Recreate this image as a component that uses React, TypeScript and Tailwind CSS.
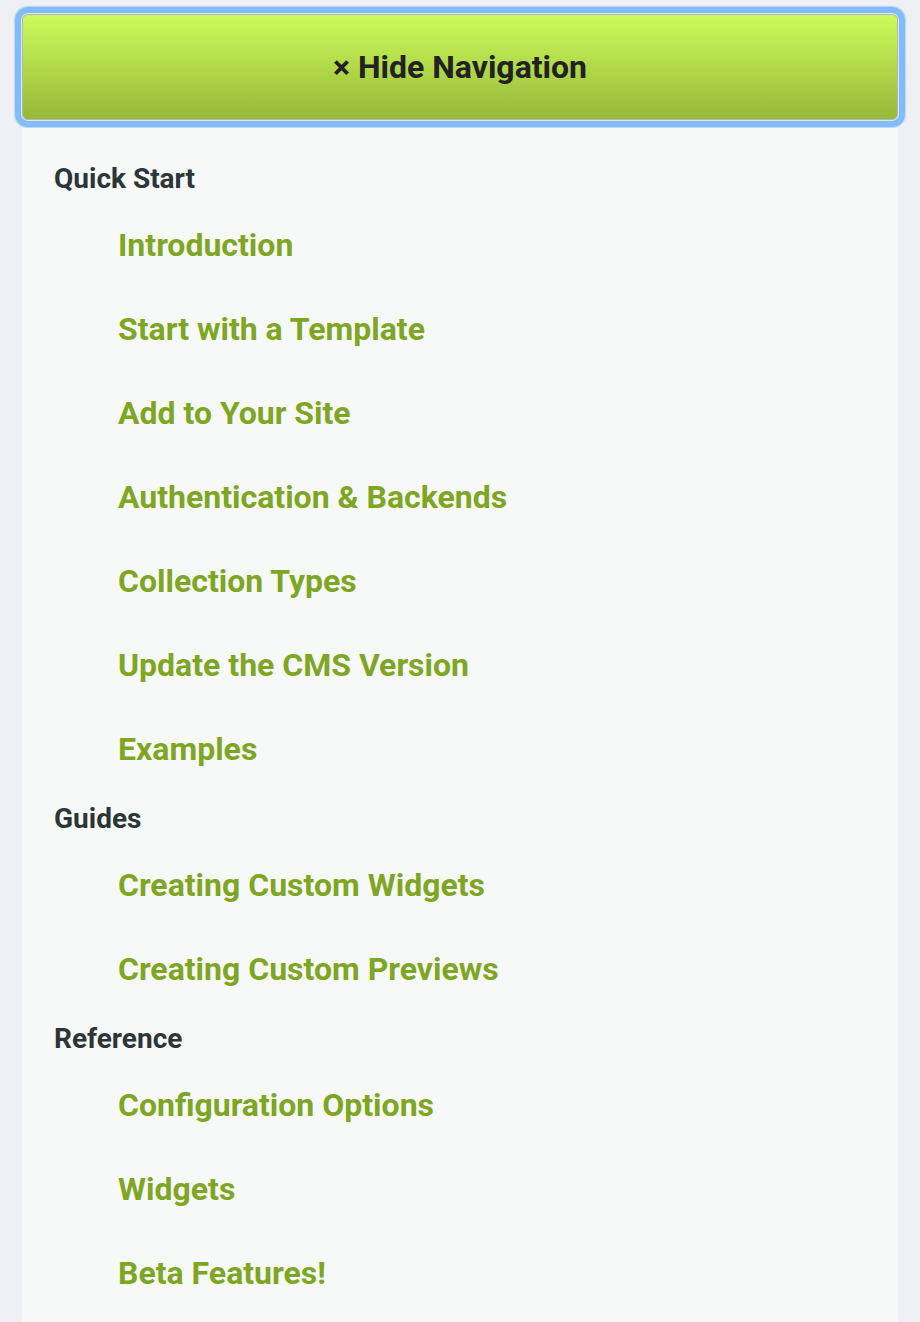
const sections = [
  {
    title: 'Quick Start',
    links: [
      'Introduction',
      'Start with a Template',
      'Add to Your Site',
      'Authentication & Backends',
      'Collection Types',
      'Update the CMS Version',
      'Examples',
    ],
  },
  {
    title: 'Guides',
    links: ['Creating Custom Widgets', 'Creating Custom Previews'],
  },
  {
    title: 'Reference',
    links: ['Configuration Options', 'Widgets', 'Beta Features!'],
  },
]

export default function App() {
  return (
    <div
      className="min-h-[1322px] bg-[#eff0f4] px-[22px] pt-[14px]"
      style={{ fontFamily: 'Roboto, "Noto Sans", sans-serif' }}
    >
      {/* TOGGLE BUTTON */}
      <button
        type="button"
        className="mb-[8px] flex h-[106px] w-full items-center justify-center rounded-[6px] border border-[#b4b9b0] bg-gradient-to-b from-[#cbfb5a] to-[#98b83a] text-[32px] font-bold text-[#222] shadow-[0_0_0_1px_#dfe5ee,0_0_0_7px_#82bcf8,0_0_1px_8px_#b9d8fb]"
      >
        × Hide Navigation
      </button>

      {/* NAV */}
      <nav className="bg-[#f7f8f8] pt-[23px] pb-[40px]">
        {sections.map((s) => (
          <div key={s.title}>
            <h3 className="flex h-[52px] items-center pt-[4px] pl-[32px] text-[28px] font-bold text-[#2c3638]">
              {s.title}
            </h3>
            <ul>
              {s.links.map((l) => (
                <li key={l} className="flex h-[84px] items-center pl-[96px]">
                  <a href="#" className="text-[32px] font-bold text-[#7ea624]">
                    {l}
                  </a>
                </li>
              ))}
            </ul>
          </div>
        ))}
      </nav>
    </div>
  )
}
